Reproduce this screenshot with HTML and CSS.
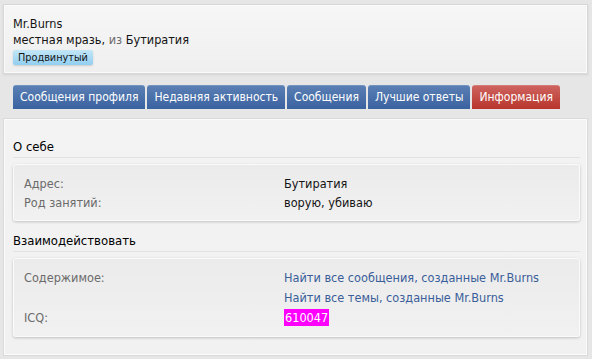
FILE: index.html
```html
<!DOCTYPE html>
<html lang="ru">
<head>
    <meta charset="UTF-8">
    <title>Mr.Burns - Информация</title>
    <link rel="stylesheet" href="styles.css">
</head>
<body>
    <div class="profile-head">
        <div class="username">Mr.Burns</div>
        <div class="user-title">местная мразь, <span class="muted">из</span> Бутиратия</div>
        <span class="banner">Продвинутый</span>
    </div>

    <ul class="tabs">
        <li class="tab">Сообщения профиля</li>
        <li class="tab">Недавняя активность</li>
        <li class="tab">Сообщения</li>
        <li class="tab">Лучшие ответы</li>
        <li class="tab active">Информация</li>
    </ul>

    <div class="panel">
        <h3 class="section-title">О себе</h3>
        <div class="info-box">
            <dl class="pair">
                <dt>Адрес:</dt>
                <dd>Бутиратия</dd>
            </dl>
            <dl class="pair">
                <dt>Род занятий:</dt>
                <dd>ворую, убиваю</dd>
            </dl>
        </div>

        <h3 class="section-title">Взаимодействовать</h3>
        <div class="info-box">
            <dl class="pair">
                <dt>Содержимое:</dt>
                <dd>
                    <a href="#" class="link">Найти все сообщения, созданные Mr.Burns</a>
                    <a href="#" class="link">Найти все темы, созданные Mr.Burns</a>
                </dd>
            </dl>
            <dl class="pair">
                <dt>ICQ:</dt>
                <dd><span class="icq">610047</span></dd>
            </dl>
        </div>
    </div>
</body>
</html>
```

FILE: styles.css
```css
body {
    font-family: "DejaVu Sans Condensed", "DejaVu Sans", sans-serif;
    font-size: 12.6px;
    color: #141414;
    background-color: #e6e6e6;
    margin: 0;
    padding: 4px 4px 3px 3px;
}

.profile-head {
    box-sizing: border-box;
    height: 70px;
    padding: 11px 9px 0;
    background: linear-gradient(to bottom, #f6f6f6, #efefef);
    border: 1px solid #d8d8d8;
    box-shadow: inset 0 0 0 1px #fafafa, 0 1px 2px rgba(0, 0, 0, 0.08);
}

.username,
.user-title {
    line-height: 16px;
}

.muted {
    color: #6c6c6c;
}

.banner {
    display: inline-block;
    margin-top: 2px;
    padding: 0 5px;
    font-size: 10.8px;
    line-height: 15px;
    background: linear-gradient(to bottom, #c3e6f8, #92cff0);
    border-radius: 2px;
    box-shadow: 0 1px 2px rgba(0, 0, 0, 0.15);
}

.tabs {
    list-style: none;
    margin: 11px 0 0;
    padding: 0 0 0 10px;
    display: flex;
    gap: 2px;
}

.tab {
    color: #fff;
    white-space: nowrap;
    font-size: 12px;
    line-height: 24px;
    padding: 0 7px;
    background: linear-gradient(to bottom, #5b80b5, #3a62a0);
    border-radius: 3px 3px 0 0;
    box-shadow: inset 0 1px 0 rgba(255, 255, 255, 0.15);
}

.tab.active {
    background: linear-gradient(to bottom, #cf6460, #b8352c);
}

.panel {
    margin-top: 9px;
    background: linear-gradient(to bottom, #f3f3f3, #f1f1f1);
    border: 1px solid #dadada;
    box-shadow: inset 0 0 0 1px #fbfbfb;
    padding: 20px 7px 18px 9px;
}

.section-title {
    font-size: 13px;
    font-weight: normal;
    line-height: 16px;
    margin: 0 0 6px;
    padding-bottom: 2px;
    border-bottom: 1px solid #e2e2e2;
    color: #000;
}

.info-box {
    background: linear-gradient(to bottom, #ebebeb, #f1f1f1);
    border: 1px solid #fafafa;
    border-radius: 3px;
    box-shadow: 0 1px 3px rgba(0, 0, 0, 0.2);
    padding: 9px 10px 8px;
    margin-bottom: 12px;
}

.info-box:last-child {
    margin-bottom: 0;
    padding-bottom: 9px;
}

.pair {
    display: flex;
    margin: 0;
}

.pair dt {
    width: 260px;
    color: #6b6b6b;
    line-height: 19px;
}

.pair dd {
    margin: 0;
    line-height: 19px;
}

.link {
    display: block;
    color: #3a5e9a;
    text-decoration: none;
    line-height: 20px;
}

.icq {
    background-color: #ff00ff;
    color: #fff;
    padding: 1px 1px;
}
```
